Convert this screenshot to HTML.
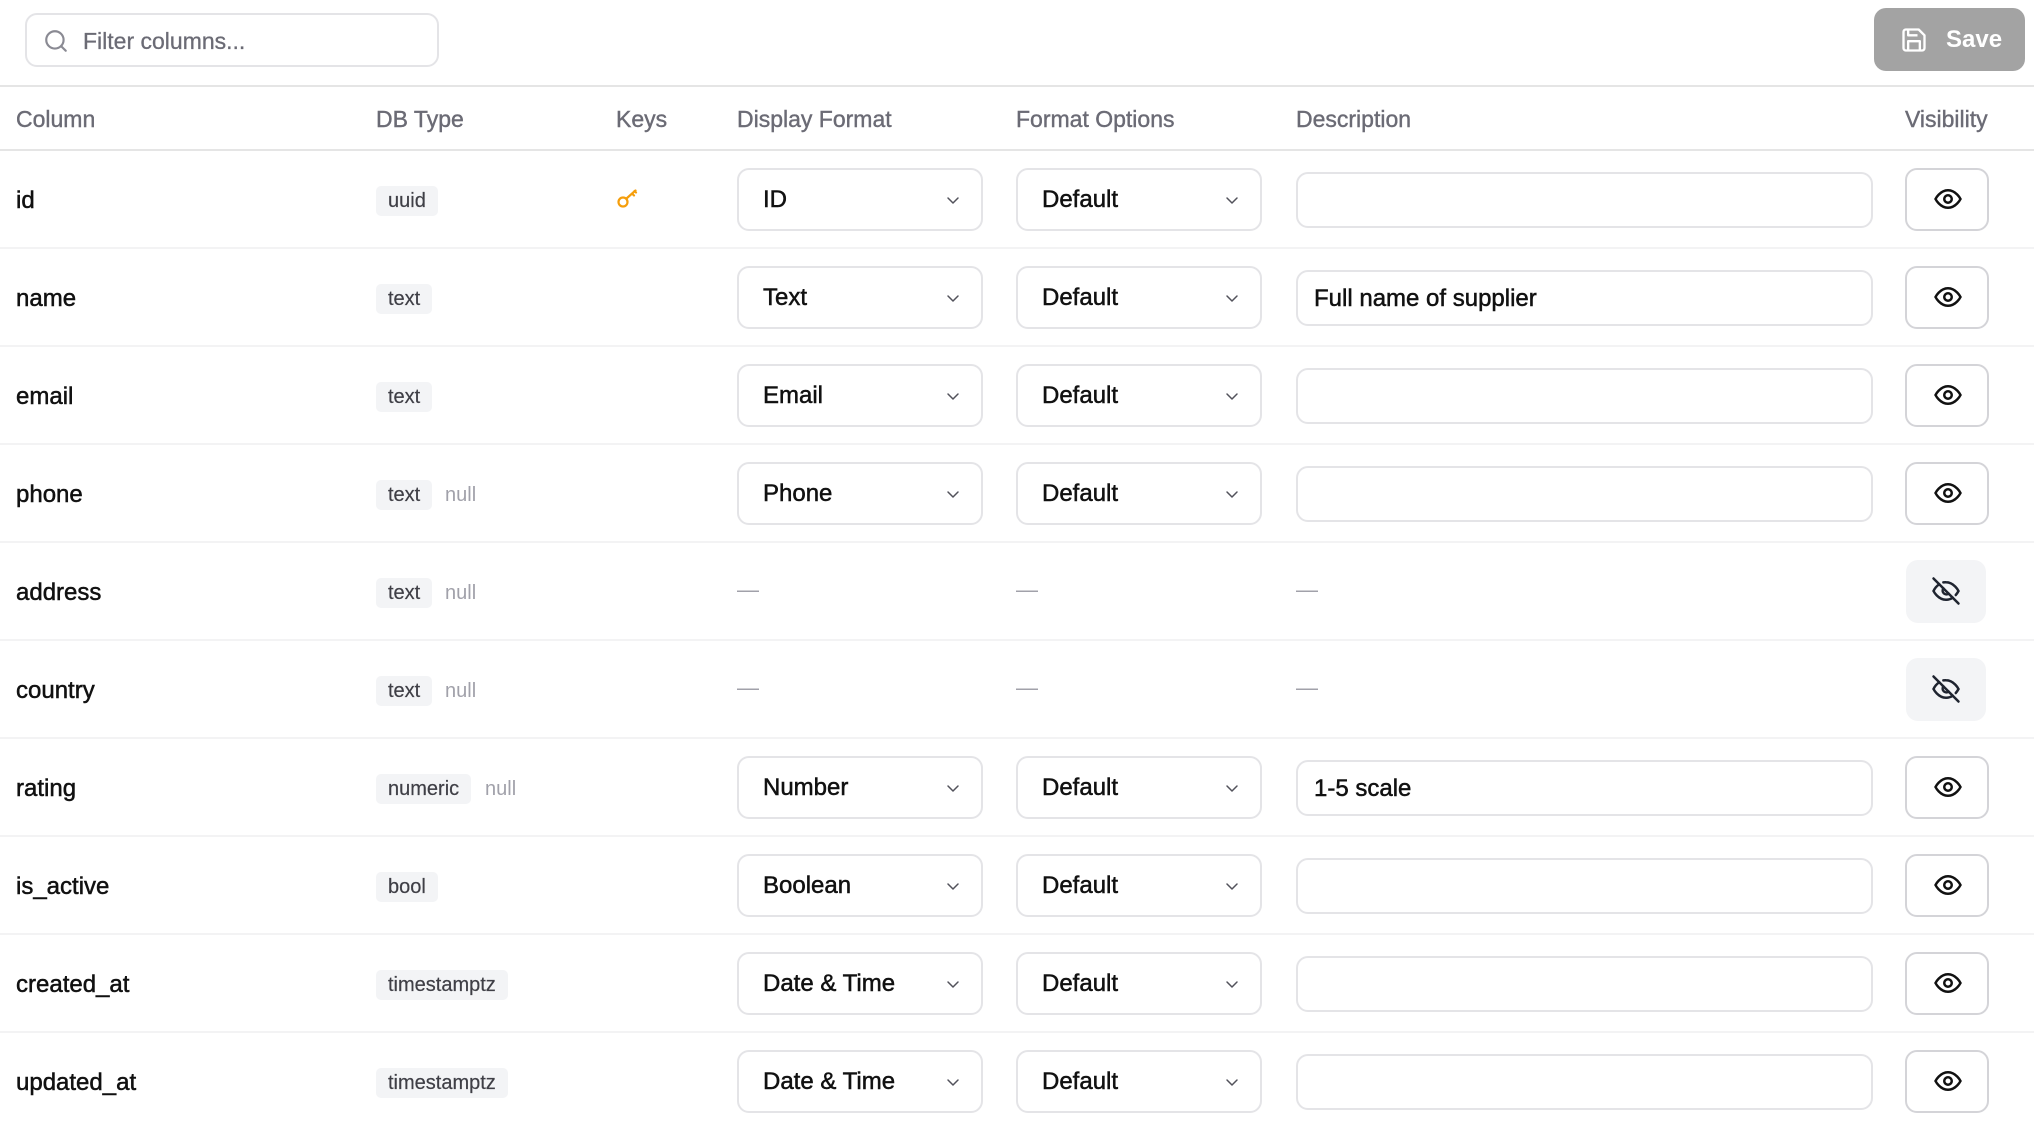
<!DOCTYPE html>
<html><head><meta charset="utf-8"><style>
*{box-sizing:border-box;margin:0;padding:0}
body{width:2034px;height:1140px;background:#fff;font-family:"Liberation Sans",sans-serif;color:#111;position:relative;overflow:hidden}
.abs{position:absolute}
.search{left:25px;top:13px;width:414px;height:54px;border:2px solid #e4e4e7;border-radius:12px}
.search span{position:absolute;left:56px;top:13px;font-size:23px;color:#6b6b75;-webkit-text-stroke:0.3px #6b6b75}
.save{left:1874px;top:8px;width:151px;height:63px;background:#a3a3a3;border-radius:12px;color:#fff;font-size:24px;font-weight:bold}
.hline{left:0;width:2034px;height:2px;background:#e5e5e5}
.th{top:106px;font-size:23px;color:#6b6b75;-webkit-text-stroke:0.4px #6b6b75}
.row{position:absolute;left:0;width:2034px;height:98px;border-bottom:2px solid #f3f3f4}
.name{position:absolute;left:16px;top:36px;font-size:24px;-webkit-text-stroke:0.5px #111}
.badge{position:absolute;left:376px;top:35px;height:30px;background:#f3f4f6;border-radius:5px;padding:0 12px;font-size:20px;line-height:31px;color:#3f3f46;-webkit-text-stroke:0.2px #3f3f46}
.null{position:absolute;top:35px;line-height:31px;font-size:20px;color:#a1a1aa}
.sel{position:absolute;top:17px;width:246px;height:63px;border:2px solid #e4e4e7;border-radius:12px;font-size:24px;padding-left:24px;line-height:60px;-webkit-text-stroke:0.5px #111}
.sel svg{position:absolute;right:18px;top:20px}
.inp{position:absolute;left:1296px;top:21px;width:577px;height:56px;border:2px solid #e4e4e7;border-radius:12px;font-size:24px;padding-left:16px;line-height:53px;-webkit-text-stroke:0.5px #111}
.eye{position:absolute;left:1905px;top:17px;width:84px;height:63px;border:2px solid #d4d4d8;border-radius:12px}
.eye svg{position:absolute;left:26px;top:14px}
.hid{position:absolute;left:1906px;top:17px;width:80px;height:63px;background:#f3f4f6;border-radius:12px}
.hid svg{position:absolute;left:25px;top:16px}
.dash{position:absolute;top:34px;font-size:22px;color:#a1a1aa}
</style></head><body>
<svg width="0" height="0" style="position:absolute"><defs>
<symbol id="chev" viewBox="0 0 20 20"><path d="M5 8l5 5 5-5" fill="none" stroke="#52525b" stroke-width="1.5" stroke-linecap="round" stroke-linejoin="round"/></symbol>
<symbol id="eye" viewBox="0 0 24 24"><path d="M2 12s3.5-7 10-7 10 7 10 7-3.5 7-10 7S2 12 2 12z" fill="none" stroke="#111" stroke-width="2"/><circle cx="12" cy="12" r="3" fill="none" stroke="#111" stroke-width="2"/></symbol>
<symbol id="eyeoff" viewBox="0 0 24 24"><g fill="none" stroke="#1f2430" stroke-width="2" stroke-linecap="round"><path d="M9.9 5.1A10 10 0 0 1 12 5c6.5 0 10 7 10 7a17 17 0 0 1-2.2 3.2M6.6 6.6C3.6 8.6 2 12 2 12s3.5 7 10 7a9.7 9.7 0 0 0 5.4-1.6"/><path d="M9.9 9.9a3 3 0 0 0 4.2 4.2"/><path d="M2 2l20 20"/></g></symbol>
</defs></svg>
<div class="abs search"><svg class="abs" style="left:16px;top:13px" width="26" height="26" viewBox="0 0 24 24" fill="none" stroke="#8a8a93" stroke-width="2" stroke-linecap="round"><circle cx="11" cy="11" r="8"/><path d="M21 21l-4.3-4.3"/></svg><span>Filter columns...</span></div>
<div class="abs save"><svg class="abs" style="left:26px;top:18px" width="28" height="28" viewBox="0 0 24 24" fill="none" stroke="#fff" stroke-width="2" stroke-linejoin="round"><path d="M5 3h11l5 5v11a2 2 0 0 1-2 2H5a2 2 0 0 1-2-2V5a2 2 0 0 1 2-2z"/><path d="M7 21v-8h10v8M7 3v5h8"/></svg><span class="abs" style="left:72px;top:18px">Save</span></div>
<div class="abs hline" style="top:85px"></div>
<div class="abs th" style="left:16px">Column</div>
<div class="abs th" style="left:376px">DB Type</div>
<div class="abs th" style="left:616px">Keys</div>
<div class="abs th" style="left:737px">Display Format</div>
<div class="abs th" style="left:1016px">Format Options</div>
<div class="abs th" style="left:1296px">Description</div>
<div class="abs th" style="left:1905px">Visibility</div>
<div class="abs hline" style="top:149px"></div>
<div class="abs" style="left:0;top:151px">
<div class="row" style="top:0"><div class="name">id</div><div class="badge">uuid</div>
<svg class="abs" style="left:614px;top:32px" width="28" height="28" viewBox="0 0 28 28" fill="none" stroke="#f59e0b" stroke-width="2.2" stroke-linecap="round"><circle cx="9" cy="19" r="4.5"/><path d="M12.5 15.5l9-8M18 10.5l2 2M20.5 8l1.5 1.5"/></svg>
<div class="sel" style="left:737px">ID<svg width="20" height="20"><use href="#chev"/></svg></div><div class="sel" style="left:1016px">Default<svg width="20" height="20"><use href="#chev"/></svg></div><div class="inp"></div><div class="eye"><svg width="30" height="30"><use href="#eye"/></svg></div></div>
<div class="row" style="top:98px"><div class="name">name</div><div class="badge">text</div><div class="sel" style="left:737px">Text<svg width="20" height="20"><use href="#chev"/></svg></div><div class="sel" style="left:1016px">Default<svg width="20" height="20"><use href="#chev"/></svg></div><div class="inp">Full name of supplier</div><div class="eye"><svg width="30" height="30"><use href="#eye"/></svg></div></div>
<div class="row" style="top:196px"><div class="name">email</div><div class="badge">text</div><div class="sel" style="left:737px">Email<svg width="20" height="20"><use href="#chev"/></svg></div><div class="sel" style="left:1016px">Default<svg width="20" height="20"><use href="#chev"/></svg></div><div class="inp"></div><div class="eye"><svg width="30" height="30"><use href="#eye"/></svg></div></div>
<div class="row" style="top:294px"><div class="name">phone</div><div class="badge">text</div><div class="null" style="left:445px">null</div><div class="sel" style="left:737px">Phone<svg width="20" height="20"><use href="#chev"/></svg></div><div class="sel" style="left:1016px">Default<svg width="20" height="20"><use href="#chev"/></svg></div><div class="inp"></div><div class="eye"><svg width="30" height="30"><use href="#eye"/></svg></div></div>
<div class="row" style="top:392px"><div class="name">address</div><div class="badge">text</div><div class="null" style="left:445px">null</div><div class="dash" style="left:737px">—</div><div class="dash" style="left:1016px">—</div><div class="dash" style="left:1296px">—</div><div class="hid"><svg width="30" height="30"><use href="#eyeoff"/></svg></div></div>
<div class="row" style="top:490px"><div class="name">country</div><div class="badge">text</div><div class="null" style="left:445px">null</div><div class="dash" style="left:737px">—</div><div class="dash" style="left:1016px">—</div><div class="dash" style="left:1296px">—</div><div class="hid"><svg width="30" height="30"><use href="#eyeoff"/></svg></div></div>
<div class="row" style="top:588px"><div class="name">rating</div><div class="badge">numeric</div><div class="null" style="left:485px">null</div><div class="sel" style="left:737px">Number<svg width="20" height="20"><use href="#chev"/></svg></div><div class="sel" style="left:1016px">Default<svg width="20" height="20"><use href="#chev"/></svg></div><div class="inp">1-5 scale</div><div class="eye"><svg width="30" height="30"><use href="#eye"/></svg></div></div>
<div class="row" style="top:686px"><div class="name">is_active</div><div class="badge">bool</div><div class="sel" style="left:737px">Boolean<svg width="20" height="20"><use href="#chev"/></svg></div><div class="sel" style="left:1016px">Default<svg width="20" height="20"><use href="#chev"/></svg></div><div class="inp"></div><div class="eye"><svg width="30" height="30"><use href="#eye"/></svg></div></div>
<div class="row" style="top:784px"><div class="name">created_at</div><div class="badge">timestamptz</div><div class="sel" style="left:737px">Date &amp; Time<svg width="20" height="20"><use href="#chev"/></svg></div><div class="sel" style="left:1016px">Default<svg width="20" height="20"><use href="#chev"/></svg></div><div class="inp"></div><div class="eye"><svg width="30" height="30"><use href="#eye"/></svg></div></div>
<div class="row" style="top:882px;border-bottom:none"><div class="name">updated_at</div><div class="badge">timestamptz</div><div class="sel" style="left:737px">Date &amp; Time<svg width="20" height="20"><use href="#chev"/></svg></div><div class="sel" style="left:1016px">Default<svg width="20" height="20"><use href="#chev"/></svg></div><div class="inp"></div><div class="eye"><svg width="30" height="30"><use href="#eye"/></svg></div></div>
</div>
</body></html>
